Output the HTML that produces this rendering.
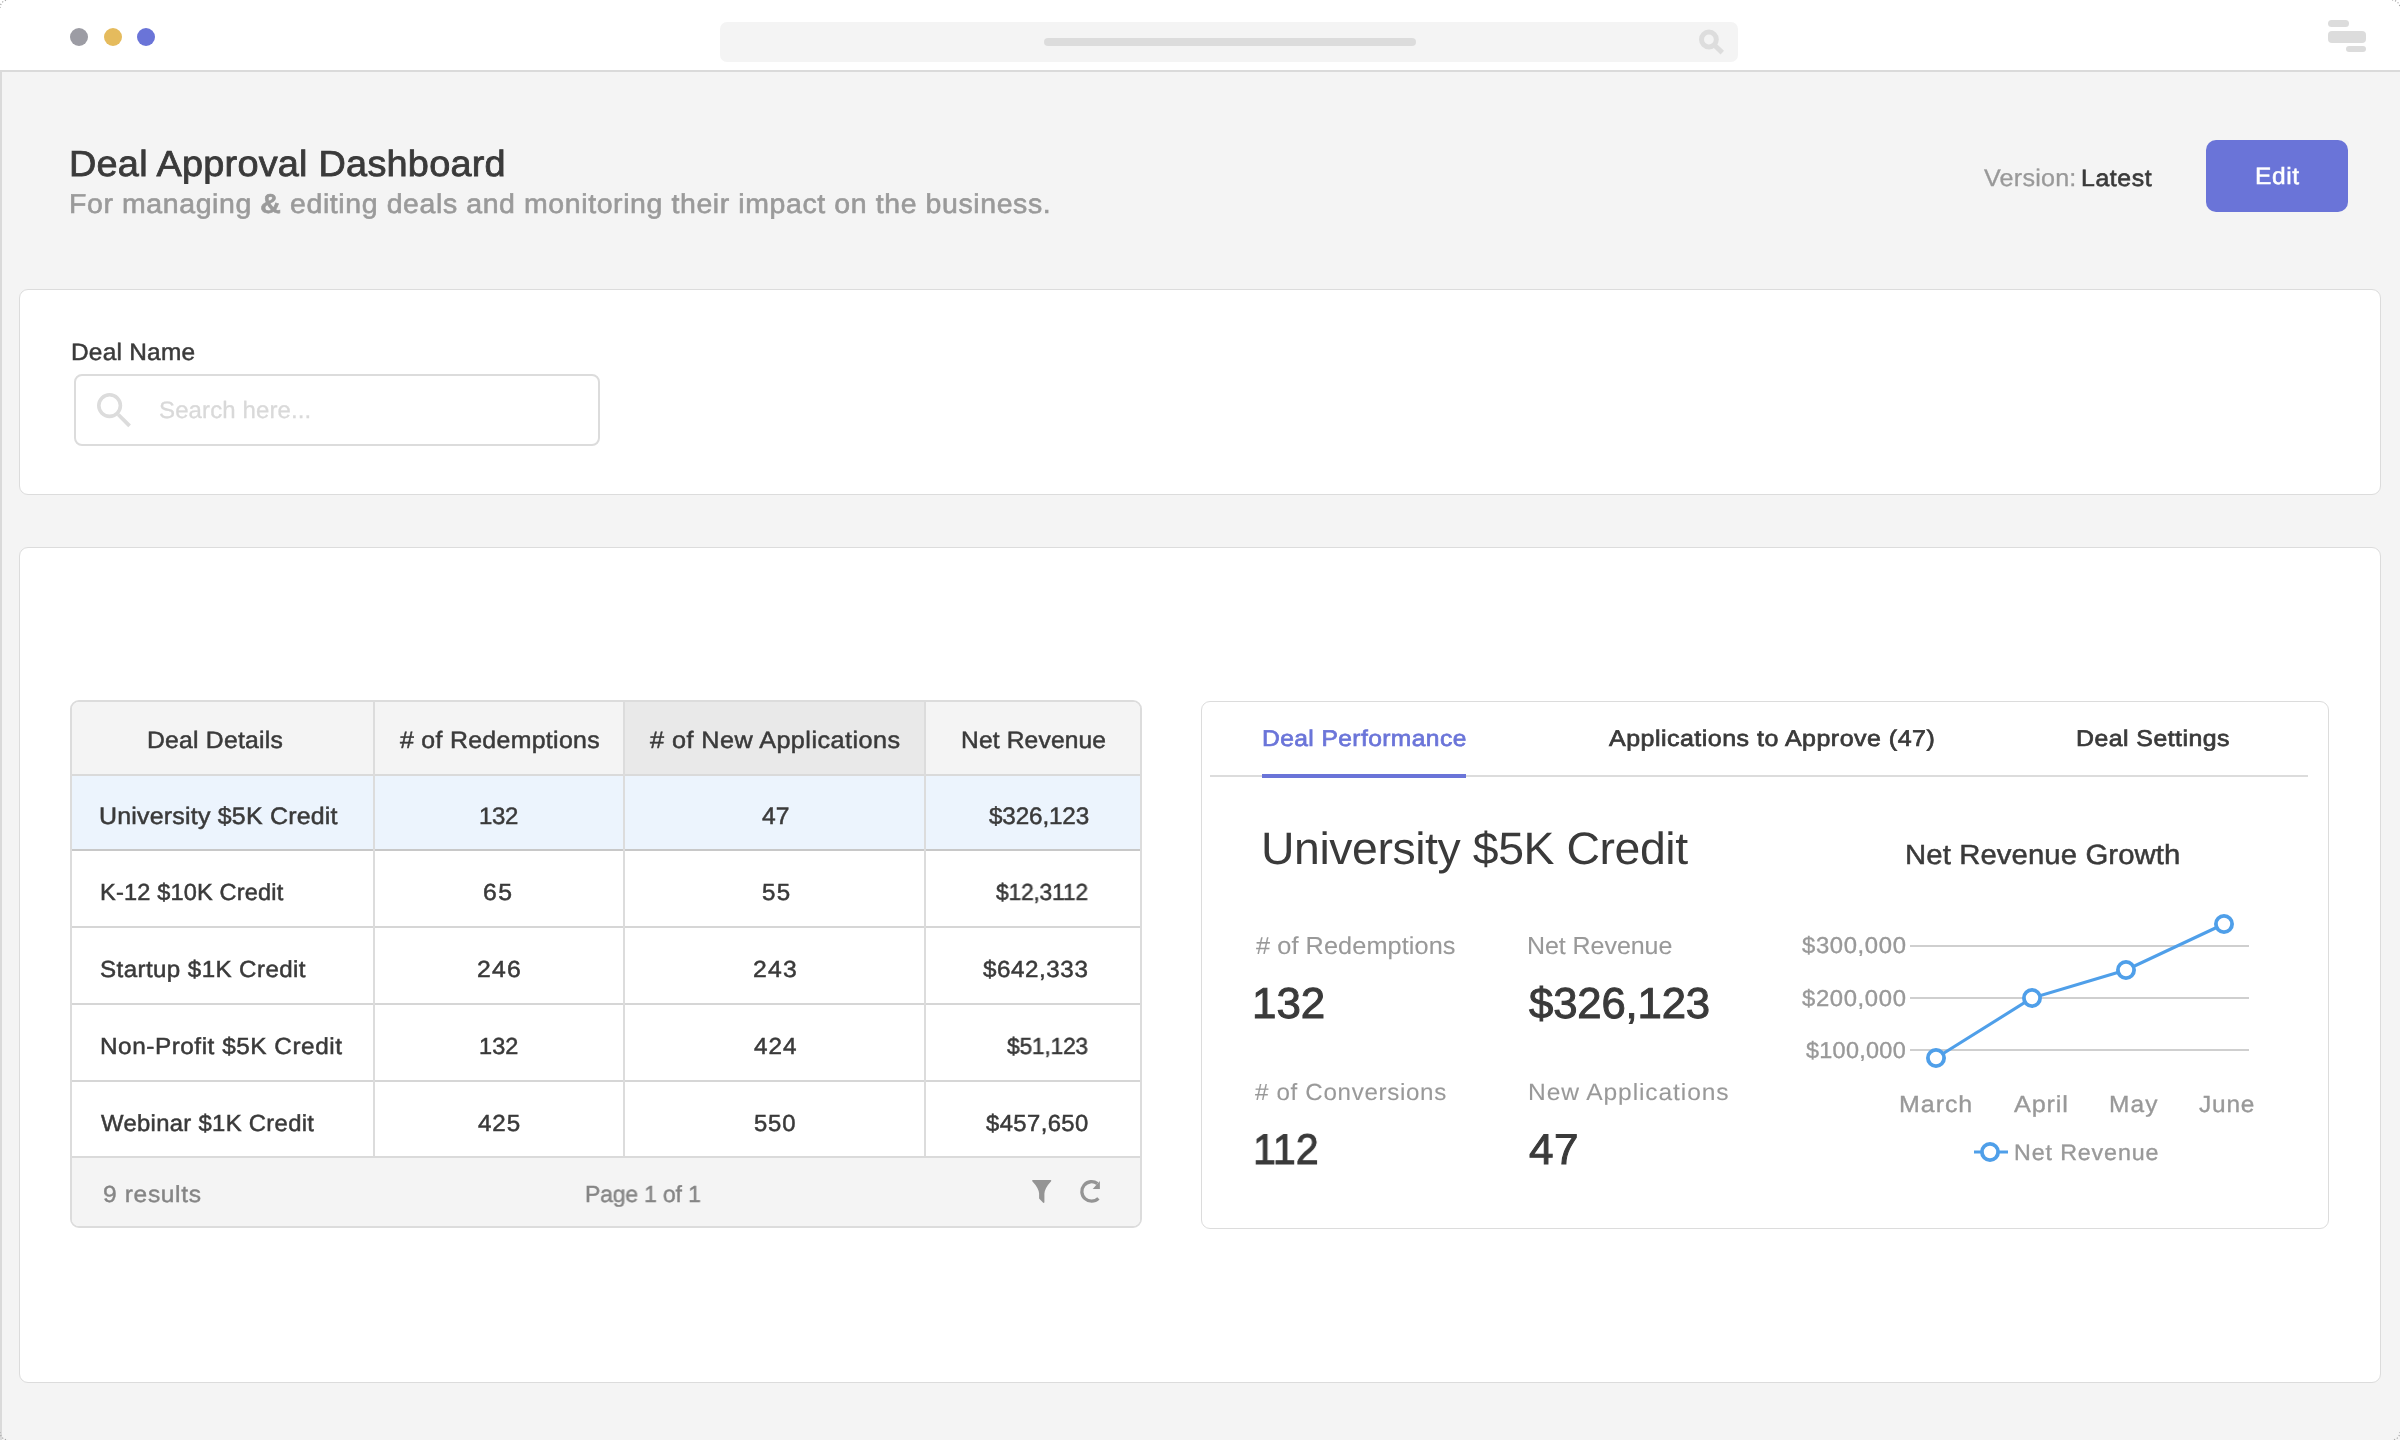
<!DOCTYPE html>
<html><head><meta charset="utf-8"><title>Deal Approval Dashboard</title><style>
*{margin:0;padding:0;box-sizing:border-box}
html,body{width:2400px;height:1440px;overflow:hidden}
body{background:#f4f4f4;position:relative;font-family:"Liberation Sans",sans-serif}
.t{position:absolute;white-space:nowrap;line-height:1;transform-origin:0 0;text-rendering:geometricPrecision;will-change:transform}
.a{position:absolute}
</style></head>
<body>
<!-- top bar -->
<div class="a" style="left:0;top:0;width:2400px;height:72px;background:#fff;border-bottom:2px solid #dadada"></div>
<div class="a" style="left:70px;top:28px;width:18px;height:18px;border-radius:50%;background:#9c9ca4"></div>
<div class="a" style="left:103.5px;top:28px;width:18px;height:18px;border-radius:50%;background:#e5bb5d"></div>
<div class="a" style="left:137px;top:28px;width:18px;height:18px;border-radius:50%;background:#6a74d8"></div>
<div class="a" style="left:720px;top:22px;width:1018px;height:40px;border-radius:7px;background:#f4f4f4"></div>
<div class="a" style="left:1044px;top:37.5px;width:372px;height:8px;border-radius:4px;background:#dcdcdc"></div>
<svg class="a" style="left:1696px;top:28px" width="32" height="30" viewBox="0 0 32 30">
 <circle cx="12.9" cy="11.5" r="7.4" fill="none" stroke="#dddddd" stroke-width="5"/>
 <line x1="18" y1="16.8" x2="26.3" y2="24.6" stroke="#dddddd" stroke-width="5"/>
</svg>
<div class="a" style="left:2328px;top:20px;width:21px;height:7px;border-radius:3.5px;background:#dcdcdc"></div>
<div class="a" style="left:2328px;top:31px;width:38px;height:12px;border-radius:4px;background:#dcdcdc"></div>
<div class="a" style="left:2346px;top:46px;width:20px;height:6px;border-radius:3px;background:#dcdcdc"></div>
<!-- left border -->
<div class="a" style="left:0;top:70px;width:2px;height:1370px;background:#dadada"></div>
<!-- edit button -->
<div class="a" style="left:2206px;top:140px;width:142px;height:72px;border-radius:10px;background:#6a74d8"></div>
<!-- card 1 -->
<div class="a" style="left:19px;top:289px;width:2362px;height:206px;border-radius:9px;background:#fff;border:1px solid #dcdcdc"></div>
<div class="a" style="left:74px;top:374px;width:526px;height:72px;border-radius:8px;background:#fff;border:2px solid #dcdcdc"></div>
<svg class="a" style="left:90px;top:388px" width="50" height="50" viewBox="0 0 50 50">
 <circle cx="19.6" cy="17.6" r="10.8" fill="none" stroke="#dcdcdc" stroke-width="3.6"/>
 <line x1="28.2" y1="26.5" x2="39.6" y2="37.8" stroke="#dcdcdc" stroke-width="3.8"/>
</svg>
<!-- card 2 -->
<div class="a" style="left:19px;top:547px;width:2362px;height:836px;border-radius:9px;background:#fff;border:1px solid #dcdcdc"></div>
<!-- table -->
<div class="a" style="left:70px;top:700px;width:1072px;height:528px;border-radius:9px;background:#fff;border:2px solid #dcdcdc;overflow:hidden">
  <div class="a" style="left:0;top:0;width:1068px;height:74px;background:#f4f4f4"></div>
  <div class="a" style="left:553px;top:0;width:299px;height:74px;background:#e9e9e9"></div>
  <div class="a" style="left:0;top:74px;width:1068px;height:73px;background:#ecf4fd"></div>
  <div class="a" style="left:0;top:456px;width:1068px;height:70px;background:#f4f4f4"></div>
  <div class="a" style="left:0;top:72px;width:1068px;height:2px;background:#dadada"></div>
  <div class="a" style="left:0;top:147px;width:1068px;height:2px;background:#c8c8c8"></div>
  <div class="a" style="left:0;top:224px;width:1068px;height:2px;background:#d6d6d6"></div>
  <div class="a" style="left:0;top:301px;width:1068px;height:2px;background:#d6d6d6"></div>
  <div class="a" style="left:0;top:378px;width:1068px;height:2px;background:#d6d6d6"></div>
  <div class="a" style="left:0;top:454px;width:1068px;height:2px;background:#dadada"></div>
  <div class="a" style="left:301px;top:0;width:2px;height:454px;background:#dcdcdc"></div>
  <div class="a" style="left:551px;top:0;width:2px;height:454px;background:#dcdcdc"></div>
  <div class="a" style="left:852px;top:0;width:2px;height:454px;background:#dcdcdc"></div>
</div>
<svg class="a" style="left:1026px;top:1176px" width="80" height="32" viewBox="0 0 80 32">
 <path d="M6.8 4.1 H24.6 Q25.8 4.3 25.1 5.3 Q18.9 12 18.4 17.5 V26.6 L17.4 27.1 L13.1 22.5 V17.5 Q12.6 12 6.3 5.3 Q5.6 4.3 6.8 4.1 Z" fill="#949494"/>
 <path d="M72.4 22.4 A9.75 9.75 0 1 1 71.4 7.6" fill="none" stroke="#949494" stroke-width="3.3"/>
 <path d="M73.9 4.9 V13.1 H66.7 Z" fill="#949494"/>
</svg>
<!-- right panel -->
<div class="a" style="left:1201px;top:701px;width:1128px;height:528px;border-radius:9px;background:#fff;border:1px solid #dcdcdc"></div>
<div class="a" style="left:1210px;top:775px;width:1098px;height:2px;background:#dcdcdc"></div>
<div class="a" style="left:1262px;top:774px;width:204px;height:4px;background:#6a74d8"></div>
<!-- chart -->
<svg class="a" style="left:1780px;top:890px" width="560" height="300" viewBox="1780 890 560 300">
 <line x1="1910" y1="946" x2="2249" y2="946" stroke="#cfcfcf" stroke-width="2"/>
 <line x1="1910" y1="998" x2="2249" y2="998" stroke="#cfcfcf" stroke-width="2"/>
 <line x1="1910" y1="1050" x2="2249" y2="1050" stroke="#cfcfcf" stroke-width="2"/>
 <polyline points="1936,1058 2032,998 2126,970 2224,924" fill="none" stroke="#4f9fe9" stroke-width="3.1"/>
 <circle cx="1936" cy="1058" r="8.1" fill="#fff" stroke="#4f9fe9" stroke-width="3.8"/>
 <circle cx="2032" cy="998" r="8.1" fill="#fff" stroke="#4f9fe9" stroke-width="3.8"/>
 <circle cx="2126" cy="970" r="8.1" fill="#fff" stroke="#4f9fe9" stroke-width="3.8"/>
 <circle cx="2224" cy="924" r="8.1" fill="#fff" stroke="#4f9fe9" stroke-width="3.8"/>
 <line x1="1974" y1="1152" x2="2008" y2="1152" stroke="#4f9fe9" stroke-width="3.1"/>
 <circle cx="1990" cy="1152" r="8.1" fill="#fff" stroke="#4f9fe9" stroke-width="3.8"/>
</svg>
<!-- window corner dotted arcs -->
<svg class="a" style="left:0;top:0" width="2400" height="1440" viewBox="0 0 2400 1440">
 <g fill="none" stroke="#a8a8a8" stroke-width="1.2" stroke-dasharray="1.2 1.9">
  <path d="M0 8 A8 8 0 0 1 8 0"/>
  <path d="M2392 0 A8 8 0 0 1 2400 8"/>
  <path d="M0 1432 A8 8 0 0 0 8 1440"/>
  <path d="M2400 1432 A8 8 0 0 1 2392 1440"/>
 </g>
</svg>

<div id="title" class="t" style="left:68.95px;top:145.70px;font-size:36.267px;letter-spacing:0.223px;color:#3a3a3a;-webkit-text-stroke:0.8px #3a3a3a;transform:scaleX(1.0445);">Deal Approval Dashboard</div>
<div id="subtitle" class="t" style="left:69.17px;top:190.13px;font-size:27.309px;letter-spacing:0.579px;color:#9a9a9a;-webkit-text-stroke:0.6px #9a9a9a;transform:scaleX(1.0427);">For managing <b style="font-weight:700">&amp;</b> editing deals and monitoring their impact on the business.</div>
<div id="ver1" class="t" style="left:1983.92px;top:166.83px;font-size:24.119px;letter-spacing:0.206px;color:#999999;-webkit-text-stroke:0.3px #999999;transform:scaleX(1.0427);">Version:</div>
<div id="ver2" class="t" style="left:2081.45px;top:167.35px;font-size:23.508px;letter-spacing:0.572px;color:#3a3a3a;-webkit-text-stroke:0.6px #3a3a3a;transform:scaleX(1.0556);">Latest</div>
<div id="edit" class="t" style="left:2254.70px;top:164.69px;font-size:23.581px;letter-spacing:0.535px;color:#ffffff;-webkit-text-stroke:0.5px #ffffff;transform:scaleX(1.0411);">Edit</div>
<div id="dealname" class="t" style="left:70.65px;top:340.50px;font-size:23.795px;letter-spacing:0.230px;color:#3a3a3a;-webkit-text-stroke:0.5px #3a3a3a;transform:scaleX(1.0269);">Deal Name</div>
<div id="placeholder" class="t" style="left:159.37px;top:400.20px;font-size:23.684px;letter-spacing:0.092px;color:#d9d9d9;-webkit-text-stroke:0.3px #d9d9d9;transform:scaleX(1.0160);">Search here...</div>
<div id="h1" class="t" style="left:146.74px;top:730.16px;font-size:23.724px;letter-spacing:0.225px;color:#3a3a3a;-webkit-text-stroke:0.5px #3a3a3a;transform:scaleX(1.0420);">Deal Details</div>
<div id="h2" class="t" style="left:399.51px;top:730.16px;font-size:23.724px;letter-spacing:0.293px;color:#3a3a3a;-webkit-text-stroke:0.5px #3a3a3a;transform:scaleX(1.0490);"># of Redemptions</div>
<div id="h3" class="t" style="left:650.31px;top:730.16px;font-size:23.724px;letter-spacing:0.422px;color:#3a3a3a;-webkit-text-stroke:0.5px #3a3a3a;transform:scaleX(1.0629);"># of New Applications</div>
<div id="h4" class="t" style="left:960.58px;top:730.16px;font-size:23.724px;letter-spacing:0.156px;color:#3a3a3a;-webkit-text-stroke:0.5px #3a3a3a;transform:scaleX(1.0359);">Net Revenue</div>
<div id="r1c1" class="t" style="left:99.45px;top:805.08px;font-size:23.830px;letter-spacing:0.205px;color:#3a3a3a;-webkit-text-stroke:0.5px #3a3a3a;transform:scaleX(1.0466);">University $5K Credit</div>
<div id="r2c1" class="t" style="left:99.94px;top:881.39px;font-size:23.235px;letter-spacing:0.167px;color:#3a3a3a;-webkit-text-stroke:0.5px #3a3a3a;transform:scaleX(1.0144);">K-12 $10K Credit</div>
<div id="r3c1" class="t" style="left:99.60px;top:957.60px;font-size:23.212px;letter-spacing:0.402px;color:#3a3a3a;-webkit-text-stroke:0.5px #3a3a3a;transform:scaleX(1.0397);">Startup $1K Credit</div>
<div id="r4c1" class="t" style="left:99.66px;top:1035.40px;font-size:23.212px;letter-spacing:0.510px;color:#3a3a3a;-webkit-text-stroke:0.5px #3a3a3a;transform:scaleX(1.0486);">Non-Profit $5K Credit</div>
<div id="r5c1" class="t" style="left:101.40px;top:1112.20px;font-size:23.212px;letter-spacing:0.309px;color:#3a3a3a;-webkit-text-stroke:0.5px #3a3a3a;transform:scaleX(1.0274);">Webinar $1K Credit</div>
<div id="r1c2" class="t" style="left:478.64px;top:805.09px;font-size:23.813px;letter-spacing:-0.294px;color:#3a3a3a;-webkit-text-stroke:0.5px #3a3a3a;transform:scaleX(1.0079);">132</div>
<div id="r1c3" class="t" style="left:761.97px;top:805.08px;font-size:23.830px;letter-spacing:0.133px;color:#3a3a3a;-webkit-text-stroke:0.5px #3a3a3a;transform:scaleX(1.0330);">47</div>
<div id="r1c4" class="t" style="left:988.55px;top:805.08px;font-size:23.830px;letter-spacing:-0.142px;color:#3a3a3a;-webkit-text-stroke:0.5px #3a3a3a;transform:scaleX(1.0183);">$326,123</div>
<div id="r2c2" class="t" style="left:483.45px;top:881.40px;font-size:23.212px;letter-spacing:1.435px;color:#3a3a3a;-webkit-text-stroke:0.5px #3a3a3a;transform:scaleX(1.0671);">65</div>
<div id="r2c3" class="t" style="left:761.84px;top:881.40px;font-size:23.212px;letter-spacing:1.243px;color:#3a3a3a;-webkit-text-stroke:0.5px #3a3a3a;transform:scaleX(1.0401);">55</div>
<div id="r2c4" class="t" style="left:996.44px;top:881.38px;font-size:23.239px;letter-spacing:-0.224px;color:#3a3a3a;-webkit-text-stroke:0.5px #3a3a3a;transform:scaleX(0.9833);">$12,3112</div>
<div id="r3c2" class="t" style="left:477.02px;top:957.60px;font-size:23.212px;letter-spacing:1.151px;color:#3a3a3a;-webkit-text-stroke:0.5px #3a3a3a;transform:scaleX(1.0666);">246</div>
<div id="r3c3" class="t" style="left:753.18px;top:957.60px;font-size:23.212px;letter-spacing:1.184px;color:#3a3a3a;-webkit-text-stroke:0.5px #3a3a3a;transform:scaleX(1.0662);">243</div>
<div id="r3c4" class="t" style="left:983.10px;top:957.60px;font-size:23.212px;letter-spacing:0.541px;color:#3a3a3a;-webkit-text-stroke:0.5px #3a3a3a;transform:scaleX(1.0425);">$642,333</div>
<div id="r4c2" class="t" style="left:479.04px;top:1035.39px;font-size:23.235px;letter-spacing:0.088px;color:#3a3a3a;-webkit-text-stroke:0.5px #3a3a3a;transform:scaleX(1.0117);">132</div>
<div id="r4c3" class="t" style="left:753.72px;top:1035.40px;font-size:23.212px;letter-spacing:0.975px;color:#3a3a3a;-webkit-text-stroke:0.5px #3a3a3a;transform:scaleX(1.0466);">424</div>
<div id="r4c4" class="t" style="left:1006.52px;top:1035.38px;font-size:23.239px;letter-spacing:-0.236px;color:#3a3a3a;-webkit-text-stroke:0.5px #3a3a3a;transform:scaleX(0.9837);">$51,123</div>
<div id="r5c2" class="t" style="left:478.40px;top:1112.20px;font-size:23.212px;letter-spacing:0.833px;color:#3a3a3a;-webkit-text-stroke:0.5px #3a3a3a;transform:scaleX(1.0431);">425</div>
<div id="r5c3" class="t" style="left:754.17px;top:1112.20px;font-size:23.212px;letter-spacing:0.798px;color:#3a3a3a;-webkit-text-stroke:0.5px #3a3a3a;transform:scaleX(1.0288);">550</div>
<div id="r5c4" class="t" style="left:985.52px;top:1112.20px;font-size:23.212px;letter-spacing:0.411px;color:#3a3a3a;-webkit-text-stroke:0.5px #3a3a3a;transform:scaleX(1.0262);">$457,650</div>
<div id="results" class="t" style="left:103.17px;top:1182.59px;font-size:23.217px;letter-spacing:0.595px;color:#858585;-webkit-text-stroke:0.4px #858585;transform:scaleX(1.0594);">9 results</div>
<div id="page" class="t" style="left:585.08px;top:1182.57px;font-size:23.249px;letter-spacing:-0.175px;color:#858585;-webkit-text-stroke:0.4px #858585;transform:scaleX(0.9892);">Page 1 of 1</div>
<div id="tab1" class="t" style="left:1261.66px;top:726.95px;font-size:22.791px;letter-spacing:0.372px;color:#6b75d9;-webkit-text-stroke:0.7px #6b75d9;transform:scaleX(1.0800);">Deal Performance</div>
<div id="tab2" class="t" style="left:1608.93px;top:726.95px;font-size:22.797px;letter-spacing:0.456px;color:#3a3a3a;-webkit-text-stroke:0.7px #3a3a3a;transform:scaleX(1.0958);">Applications to Approve (47)</div>
<div id="tab3" class="t" style="left:2075.73px;top:726.95px;font-size:22.791px;letter-spacing:0.428px;color:#3a3a3a;-webkit-text-stroke:0.7px #3a3a3a;transform:scaleX(1.0910);">Deal Settings</div>
<div id="bigname" class="t" style="left:1260.54px;top:825.60px;font-size:45.360px;letter-spacing:-0.420px;color:#3a3a3a;transform:scaleX(1.0227);">University $5K Credit</div>
<div id="chtitle" class="t" style="left:1905.36px;top:840.54px;font-size:27.773px;letter-spacing:0.081px;color:#3a3a3a;-webkit-text-stroke:0.5px #3a3a3a;transform:scaleX(1.0565);">Net Revenue Growth</div>
<div id="lab1" class="t" style="left:1256.15px;top:934.82px;font-size:24.567px;letter-spacing:0.080px;color:#999999;-webkit-text-stroke:0.1px #999999;transform:scaleX(1.0303);"># of Redemptions</div>
<div id="val1" class="t" style="left:1252.47px;top:983.40px;font-size:43.243px;letter-spacing:-0.010px;color:#3a3a3a;-webkit-text-stroke:1.0px #3a3a3a;transform:scaleX(1.0154);">132</div>
<div id="lab2" class="t" style="left:1527.09px;top:934.81px;font-size:24.578px;letter-spacing:-0.059px;color:#999999;-webkit-text-stroke:0.1px #999999;transform:scaleX(1.0177);">Net Revenue</div>
<div id="val2" class="t" style="left:1528.79px;top:983.40px;font-size:43.243px;letter-spacing:-0.170px;color:#3a3a3a;-webkit-text-stroke:1.0px #3a3a3a;transform:scaleX(1.0108);">$326,123</div>
<div id="lab3" class="t" style="left:1255.49px;top:1080.54px;font-size:23.467px;letter-spacing:0.637px;color:#999999;-webkit-text-stroke:0.1px #999999;transform:scaleX(1.0307);"># of Conversions</div>
<div id="val3" class="t" style="left:1252.95px;top:1129.34px;font-size:43.075px;letter-spacing:0.000px;color:#3a3a3a;-webkit-text-stroke:1.0px #3a3a3a;transform:scaleX(0.9557);">112</div>
<div id="lab4" class="t" style="left:1527.65px;top:1080.55px;font-size:23.456px;letter-spacing:0.849px;color:#999999;-webkit-text-stroke:0.1px #999999;transform:scaleX(1.0492);">New Applications</div>
<div id="val4" class="t" style="left:1528.78px;top:1129.34px;font-size:43.075px;letter-spacing:0.447px;color:#3a3a3a;-webkit-text-stroke:1.0px #3a3a3a;transform:scaleX(1.0220);">47</div>
<div id="y300" class="t" style="left:1802.40px;top:933.62px;font-size:22.950px;letter-spacing:0.607px;color:#999999;-webkit-text-stroke:0.35px #999999;transform:scaleX(1.0398);">$300,000</div>
<div id="y200" class="t" style="left:1802.40px;top:987.42px;font-size:22.950px;letter-spacing:0.607px;color:#999999;-webkit-text-stroke:0.35px #999999;transform:scaleX(1.0398);">$200,000</div>
<div id="y100" class="t" style="left:1805.88px;top:1038.60px;font-size:22.984px;letter-spacing:0.279px;color:#999999;-webkit-text-stroke:0.35px #999999;transform:scaleX(1.0198);">$100,000</div>
<div id="mar" class="t" style="left:1898.93px;top:1093.19px;font-size:23.226px;letter-spacing:0.899px;color:#999999;-webkit-text-stroke:0.35px #999999;transform:scaleX(1.0757);">March</div>
<div id="apr" class="t" style="left:2014.06px;top:1093.19px;font-size:23.226px;letter-spacing:0.754px;color:#999999;-webkit-text-stroke:0.35px #999999;transform:scaleX(1.0863);">April</div>
<div id="may" class="t" style="left:2108.66px;top:1093.19px;font-size:23.226px;letter-spacing:1.116px;color:#999999;-webkit-text-stroke:0.35px #999999;transform:scaleX(1.0534);">May</div>
<div id="jun" class="t" style="left:2198.62px;top:1093.19px;font-size:23.226px;letter-spacing:0.773px;color:#999999;-webkit-text-stroke:0.35px #999999;transform:scaleX(1.0521);">June</div>
<div id="legend" class="t" style="left:2013.90px;top:1142.49px;font-size:22.395px;letter-spacing:0.844px;color:#999999;-webkit-text-stroke:0.35px #999999;transform:scaleX(1.0387);">Net Revenue</div>
</body></html>
